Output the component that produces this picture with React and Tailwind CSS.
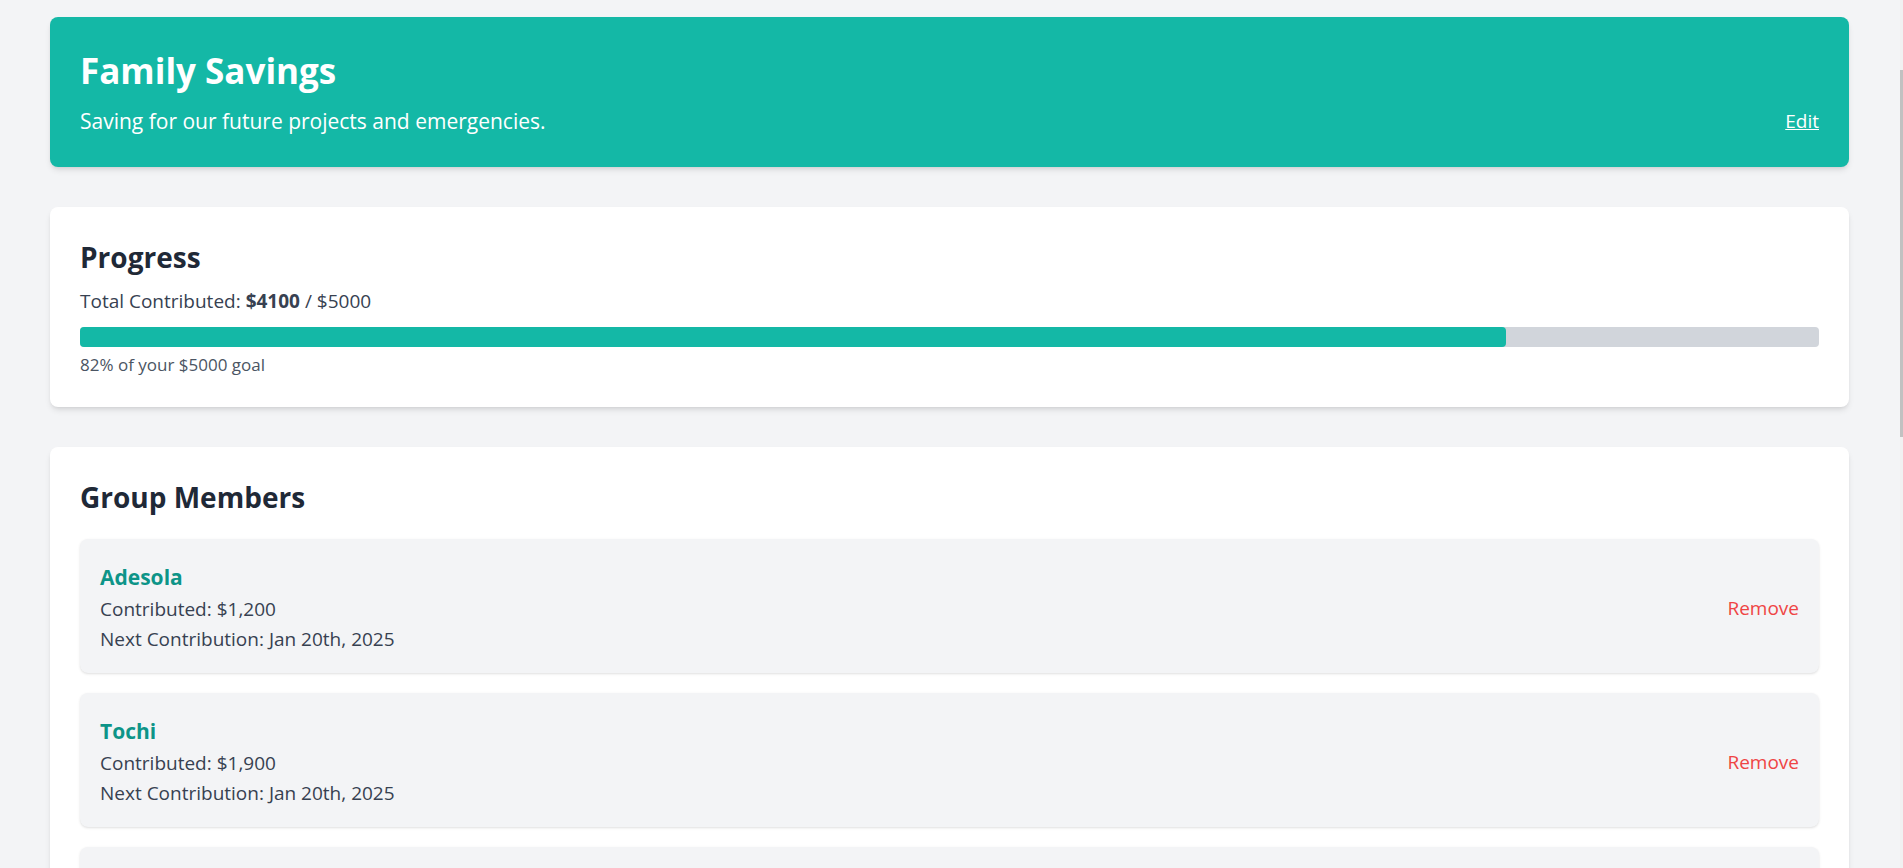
import { useState } from 'react';

const members = [
  { id: 1, name: 'Adesola', contributed: 1200, next: 'Jan 20th, 2025' },
  { id: 2, name: 'Tochi', contributed: 1900, next: 'Jan 20th, 2025' },
  { id: 3, name: 'Kemi', contributed: 1000, next: 'Jan 20th, 2025' },
];

export default function App() {
  const [list, setList] = useState(members);
  const goal = 5000;
  const total = 4100;
  const percent = Math.round((total / goal) * 100);

  const removeMember = (id) => setList((prev) => prev.filter((m) => m.id !== id));

  return (
    <div className="h-screen overflow-hidden flex bg-[#f3f4f6] font-['Open_Sans',sans-serif]">
      <div className="flex-1 flex flex-col">
        <div className="h-px bg-[#f9e2dd]" />
        <div className="pl-[50px] pr-[51px] pt-[17px]">
          <div className="bg-[#14b8a6] text-white rounded-lg shadow-md px-[30px] py-8 mb-10">
            <h1 className="text-[35px] leading-10 font-bold pt-[2px]">Family Savings</h1>
            <div className="flex items-end justify-between mt-4">
              <p className="text-[21px] leading-7">Saving for our future projects and emergencies.</p>
              <a href="#" className="text-[19px] leading-7 underline">Edit</a>
            </div>
          </div>

          <div className="bg-white rounded-lg shadow-md px-[30px] py-8 mb-10">
            <h2 className="text-[28px] leading-9 font-bold text-[#1f2937] mb-3">Progress</h2>
            <p className="text-[19px] leading-7 text-[#374151] mb-3">
              Total Contributed: <span className="font-bold">${total}</span> / ${goal}
            </p>
            <div className="w-full h-5 bg-[#d1d5db] rounded">
              <div className="h-5 bg-[#14b8a6] rounded" style={{ width: `${percent}%` }} />
            </div>
            <p className="text-[17px] leading-5 text-[#4b5563] mt-2">{percent}% of your ${goal} goal</p>
          </div>

          <div className="bg-white rounded-lg shadow-md px-[30px] py-8">
            <h2 className="text-[28px] leading-9 font-bold text-[#1f2937] mb-6">Group Members</h2>
            <div className="space-y-5">
              {list.map((m) => (
                <div key={m.id} className="bg-[#f3f4f6] rounded-lg shadow-sm px-5 pt-6 pb-5 flex items-center justify-between">
                  <div>
                    <h3 className="text-[21px] leading-7 font-bold text-[#0d9488] mb-1">{m.name}</h3>
                    <p className="text-[19px] leading-7 text-[#374151] mb-0.5">Contributed: ${m.contributed.toLocaleString('en-US')}</p>
                    <p className="text-[19px] leading-7 text-[#374151]">Next Contribution: {m.next}</p>
                  </div>
                  <button onClick={() => removeMember(m.id)} className="text-[19px] text-[#ef4444] hover:text-red-600">
                    Remove
                  </button>
                </div>
              ))}
            </div>
          </div>
        </div>
      </div>
      <div className="w-[3px] flex flex-col bg-[#f1f1f1]">
        <div className="h-[70px]" />
        <div className="h-[367px] bg-[#c1c1c1]" />
      </div>
    </div>
  );
}
